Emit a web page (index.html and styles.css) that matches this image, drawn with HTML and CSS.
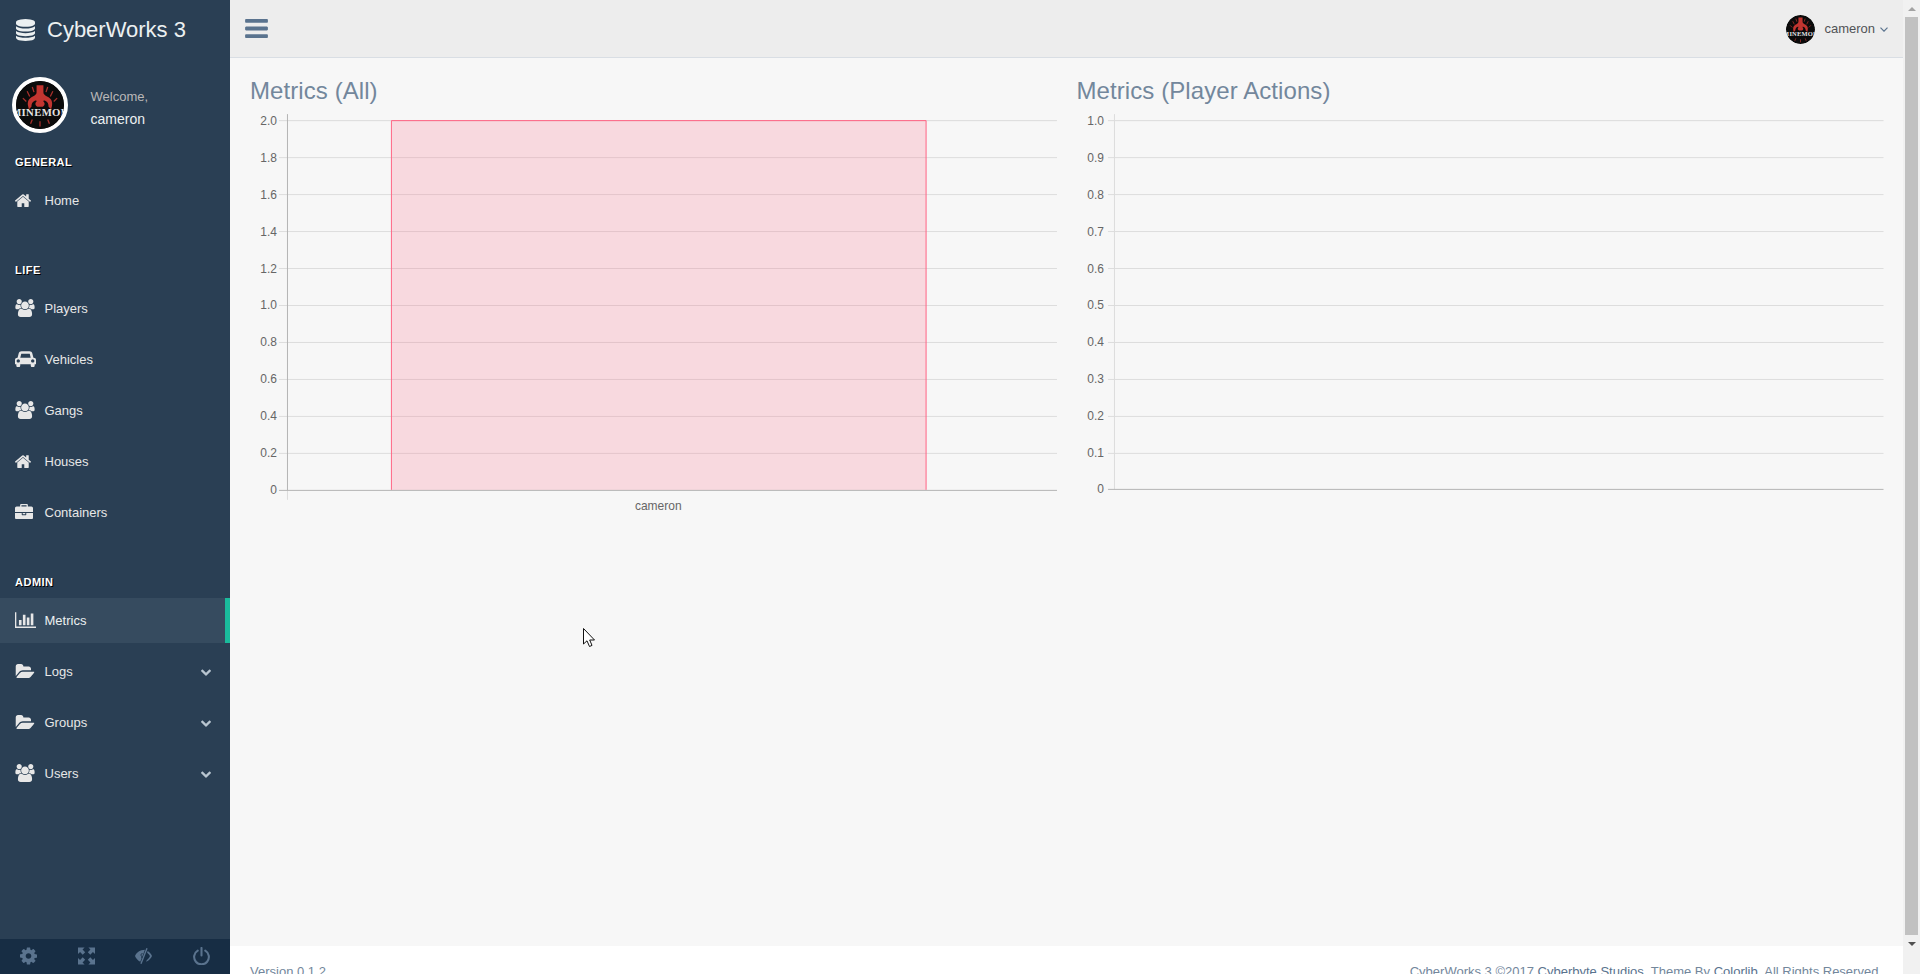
FILE: index.html
```html
<!DOCTYPE html>
<html lang="en">
<head>
<meta charset="utf-8">
<title>CyberWorks 3</title>
<link rel="stylesheet" href="styles.css">
</head>
<body>
<svg class="defs" width="0" height="0" aria-hidden="true">
  <defs>
    <symbol id="i-database" viewBox="128 0 1536 1792" preserveAspectRatio="none"><path d="M896 768q237 0 443-43t325-127v170q0 69-103 128t-280 93.5-385 34.5-385-34.5T231 896 128 768V598q119 84 325 127t443 43zm0 768q237 0 443-43t325-127v170q0 69-103 128t-280 93.5-385 34.5-385-34.5-280-93.5-103-128v-170q119 84 325 127t443 43zm0-384q237 0 443-43t325-127v170q0 69-103 128t-280 93.5-385 34.5-385-34.5-280-93.5-103-128V982q119 84 325 127t443 43zM896 0q208 0 385 34.5t280 93.5 103 128v128q0 69-103 128t-280 93.5T896 640t-385-34.5T231 512 128 384V256q0-69 103-128t280-93.5T896 0z"/></symbol>
    <symbol id="i-home" viewBox="90 128 1612 1408"><path d="M1472 992v480q0 26-19 45t-45 19h-384v-384H768v384H384q-26 0-45-19t-19-45V992q0-1 .5-3t.5-3l575-474 575 474q1 2 1 6zm223-69l-62 74q-8 9-21 11h-3q-13 0-21-7L896 424l-692 577q-12 8-24 7-13-2-21-11l-62-74q-8-10-7-23.5t11-21.5l719-599q32-26 76-26t76 26l244 204V288q0-14 9-23t23-9h192q14 0 23 9t9 23v408l219 182q10 8 11 21.5t-7 23.5z"/></symbol>
    <symbol id="i-users" viewBox="0 0 1920 1792"><path d="M593 896q-162 5-265 128H194q-82 0-138-40.5T0 865q0-353 124-353 6 0 43.5 21t97.5 42.5T384 597q67 0 133-23-5 37-5 66 0 139 81 256zm1071 637q0 120-73 189.5t-194 69.5H523q-121 0-194-69.5T256 1533q0-53 3.5-103.5t14-109T300 1212t43-97.5 62-81 85.5-53.5T602 960q10 0 43 21.5t73 48 107 48 135 21.5 135-21.5 107-48 73-48 43-21.5q61 0 111.5 20t85.5 53.5 62 81 43 97.5 26.5 108.5 14 109 3.5 103.5zM640 256q0 106-75 181t-181 75-181-75-75-181 75-181T384 0t181 75 75 181zm704 384q0 159-112.5 271.5T960 1024 688.5 911.5 576 640t112.5-271.5T960 256t271.5 112.5T1344 640zm576 225q0 78-56 118.5t-138 40.5h-134q-103-123-265-128 81-117 81-256 0-29-5-66 66 23 133 23 59 0 119-21.5t97.5-42.5 43.5-21q124 0 124 353zm-128-609q0 106-75 181t-181 75-181-75-75-181 75-181 181-75 181 75 75 181z"/></symbol>
    <symbol id="i-car" viewBox="0 128 2048 1536"><path d="M480 1088q0-66-47-113t-113-47-113 47-47 113 47 113 113 47 113-47 47-113zm36-320h1016l-89-357q-2-8-14-17.5t-21-9.5H640q-9 0-21 9.5T605 411zm1372 320q0-66-47-113t-113-47-113 47-47 113 47 113 113 47 113-47 47-113zm160-96v384q0 14-9 23t-23 9h-96v128q0 80-56 136t-136 56-136-56-56-136v-128H512v128q0 80-56 136t-136 56-136-56-56-136v-128H32q-14 0-23-9t-9-23V992q0-93 65.5-158.5T224 768h28l105-419q23-94 104-157.5T640 128h768q98 0 179 63.5T1691 349l105 419h28q93 0 158.5 65.5T2048 992z"/></symbol>
    <symbol id="i-briefcase" viewBox="0 0 1792 1536"><path d="M640 256h512V128H640v128zm1152 640v480q0 66-47 113t-113 47H160q-66 0-113-47T0 1376V896h672v160q0 26 19 45t45 19h320q26 0 45-19t19-45V896h672zm-768 0v128H768V896h256zm768-480v384H0V416q0-66 47-113t113-47h352V96q0-40 28-68t68-28h576q40 0 68 28t28 68v160h352q66 0 113 47t47 113z"/></symbol>
    <symbol id="i-chart" viewBox="0 128 2048 1536"><path d="M640 896v512H384V896h256zm384-512v1024H768V384h256zm1024 1152v128H0V128h128v1408h1920zm-640-896v768h-256V640h256zm384-384v1152h-256V256h256z"/></symbol>
    <symbol id="i-folder" viewBox="0 128 1943 1408"><path d="M1943 952q0 31-31 66l-336 396q-43 51-120.5 86.5t-143.5 35.5h-1088q-34 0-60.5-13t-26.5-43q0-31 31-66l336-396q43-51 120.5-86.5t143.5-35.5h1088q34 0 60.5 13t26.5 43zm-343-344v160h-832q-94 0-197 47.5t-164 119.5l-337 396-5 6q0-4-.5-12.5t-.5-12.5v-960q0-92 66-158t158-66h320q92 0 158 66t66 158v32h544q92 0 158 66t66 158z"/></symbol>
    <symbol id="i-chevron" viewBox="90 487 1612 1081"><path d="M1683 808l-742 741q-19 19-45 19t-45-19L109 808q-19-19-19-45.5t19-45.5l166-165q19-19 45-19t45 19l531 531 531-531q19-19 45-19t45 19l166 165q19 19 19 45.5t-19 45.5z"/></symbol>
    <symbol id="i-bars" viewBox="128 256 1536 1280"><path d="M1664 1344v128q0 26-19 45t-45 19H192q-26 0-45-19t-19-45v-128q0-26 19-45t45-19h1408q26 0 45 19t19 45zm0-512v128q0 26-19 45t-45 19H192q-26 0-45-19t-19-45V832q0-26 19-45t45-19h1408q26 0 45 19t19 45zm0-512v128q0 26-19 45t-45 19H192q-26 0-45-19t-19-45V320q0-26 19-45t45-19h1408q26 0 45 19t19 45z"/></symbol>
    <symbol id="i-cog" viewBox="128 128 1536 1536"><path d="M1152 896q0-106-75-181t-181-75-181 75-75 181 75 181 181 75 181-75 75-181zm512-109v222q0 12-8 23t-20 13l-185 28q-19 54-39 91 35 50 107 138 10 12 10 25t-9 23q-27 37-99 108t-94 71q-12 0-26-9l-138-108q-44 23-91 38-16 136-29 186-7 28-36 28H785q-14 0-24.5-8.5T749 1634l-28-184q-49-16-90-37l-141 107q-10 9-25 9-14 0-25-11-126-114-165-168-7-10-7-23 0-12 8-23 15-21 51-66.5t54-70.5q-27-50-41-99l-183-27q-13-2-21-12.5t-8-23.5V783q0-12 8-23t19-13l186-28q14-46 39-92-40-57-107-138-10-12-10-24 0-10 9-23 26-36 98.5-107.5T465 263q13 0 26 10l138 107q44-23 91-38 16-136 29-186 7-28 36-28h222q14 0 24.5 8.5T1043 158l28 184q49 16 90 37l142-107q9-9 24-9 13 0 25 10 129 119 165 170 7 8 7 22 0 12-8 23-15 21-51 66.5t-54 70.5q26 50 41 98l183 28q13 2 21 12.5t8 23.5z"/></symbol>
    <symbol id="i-full" viewBox="0 0 18 18"><path d="M0 0h7L4.8 2.2 7.6 5 5 7.6 2.2 4.8 0 7zM18 0v7l-2.2-2.2L13 7.600 10.400 5l2.800-2.800L11 0zM18 18h-7l2.200-2.200L10.400 13l2.600-2.600 2.800 2.800L18 11zM0 18v-7l2.200 2.200L5 10.400 7.600 13l-2.800 2.800L7 18z"/></symbol>
    <symbol id="i-eye" viewBox="0 0 18 18">
      <path d="M12 .5l1.400.6L7 17.500l-1.400-.6zM10.500 2.500L5.600 15C3 13.800 1 11.500 0 9 1.500 5.500 5.500 2.500 10.500 2.500zM13.400 3.800C15.500 5 17.200 7 18 9 17 11.500 14.800 14 11.800 15L12.500 13.200C14 12.300 15.200 10.800 15.900 9 15.200 7.500 14.200 6.400 12.800 5.500z"/>
      <path d="M8 6.500C6.500 6.500 6 7.500 6.500 8.500S7.600 10 6.800 11.200" fill="none" stroke="#172D44" stroke-width="1"/>
    </symbol>
    <symbol id="i-power" viewBox="0 0 18 18"><path class="stroke" d="M5 3.300A7.800 7.800 0 1 0 13 3.300M9 .5V8.500"/></symbol>
    <symbol id="i-logo" viewBox="0 0 56 56">
      <circle cx="28" cy="28" r="28" fill="#0b0b0b"/>
      <path d="M24 5h8v8c0 3 3 4 6 6 3 2 5 5 4 10l-1 4-3-3c0-3-1-6-4-7-2-1-3 0-1 2 1 2 0 4-2 5H25c-2-1-3-3-2-5 2-2 1-3-1-2-3 1-4 4-4 7l-3 3-1-4c-1-5 1-8 4-10 3-2 6-3 6-6z" fill="#c23530"/>
      <path d="M13 12l3 6M43 12l-3 6M8 20l4 4M48 20l-4 4M19 7l2 6M37 7l-2 6M17 50l2-5M39 50l-2-5M28 53v-6" stroke="#a8302c" stroke-width="1.500" fill="none"/>
      <text x="28" y="41" class="logo-text">MINEMOD</text>
    </symbol>
  </defs>
</svg>

<div class="app">
  <aside class="sidebar">
    <div class="brand">
      <svg class="brand-icon"><use href="#i-database"/></svg>
      <span class="brand-name">CyberWorks 3</span>
    </div>
    <div class="profile">
      <svg class="avatar"><use href="#i-logo"/></svg>
      <div class="profile-info">
        <span class="welcome">Welcome,</span>
        <span class="profile-name">cameron</span>
      </div>
    </div>
    <nav class="menu">
      <section class="menu-section">
        <h3>General</h3>
        <a class="item"><span class="ico"><svg class="i-home"><use href="#i-home"/></svg></span>Home</a>
      </section>
      <section class="menu-section">
        <h3>Life</h3>
        <a class="item"><span class="ico"><svg class="i-users"><use href="#i-users"/></svg></span>Players</a>
        <a class="item"><span class="ico"><svg class="i-car"><use href="#i-car"/></svg></span>Vehicles</a>
        <a class="item"><span class="ico"><svg class="i-users"><use href="#i-users"/></svg></span>Gangs</a>
        <a class="item"><span class="ico"><svg class="i-home"><use href="#i-home"/></svg></span>Houses</a>
        <a class="item"><span class="ico"><svg class="i-case"><use href="#i-briefcase"/></svg></span>Containers</a>
      </section>
      <section class="menu-section">
        <h3>Admin</h3>
        <a class="item active"><span class="ico"><svg class="i-car"><use href="#i-chart"/></svg></span>Metrics</a>
        <a class="item"><span class="ico"><svg class="i-folder"><use href="#i-folder"/></svg></span>Logs<svg class="chev"><use href="#i-chevron"/></svg></a>
        <a class="item"><span class="ico"><svg class="i-folder"><use href="#i-folder"/></svg></span>Groups<svg class="chev"><use href="#i-chevron"/></svg></a>
        <a class="item"><span class="ico"><svg class="i-users"><use href="#i-users"/></svg></span>Users<svg class="chev"><use href="#i-chevron"/></svg></a>
      </section>
    </nav>
    <div class="side-footer">
      <a class="foot-btn"><svg><use href="#i-cog"/></svg></a>
      <a class="foot-btn"><svg><use href="#i-full"/></svg></a>
      <a class="foot-btn"><svg><use href="#i-eye"/></svg></a>
      <a class="foot-btn"><svg><use href="#i-power"/></svg></a>
    </div>
  </aside>

  <div class="main">
    <header class="topbar">
      <svg class="toggle"><use href="#i-bars"/></svg>
      <div class="user">
        <svg class="user-avatar"><use href="#i-logo"/></svg>
        <span class="user-name">cameron</span>
        <svg class="angle" viewBox="0 0 8 5"><path d="M.5.7L4 4.200 7.500.7"/></svg>
      </div>
    </header>

    <main class="content">
      <div class="panel">
        <h3 class="panel-title">Metrics (All)</h3>
        <svg class="chart" viewBox="0 0 807 400">
          <g class="grid">
            <path d="M29 10.500H807.500M29 47.500H807.500M29 84.500H807.500M29 121.500H807.500M29 158.500H807.500M29 195.500H807.500M29 232.500H807.500M29 269.500H807.500M29 306.500H807.500M29 343.500H807.500"/>
            <path d="M37.500 380.500V390"/>
          </g>
          <path class="bar-fill" d="M141.500 10.500H676.500V380H141.500Z"/>
          <path class="bar-line" d="M141.500 380V10.500H676.500V380"/>
          <path class="axis" d="M37.500 4V380.500M29 380.500H807.500"/>
          <g class="ticks">
            <text x="27" y="14.500">2.0</text><text x="27" y="51.500">1.8</text><text x="27" y="88.500">1.6</text>
            <text x="27" y="125.500">1.4</text><text x="27" y="162.500">1.2</text><text x="27" y="199.500">1.0</text>
            <text x="27" y="236.500">0.8</text><text x="27" y="273.500">0.6</text><text x="27" y="310.500">0.4</text>
            <text x="27" y="347.500">0.2</text><text x="27" y="384.500">0</text>
          </g>
          <text class="label" x="408.500" y="400">cameron</text>
        </svg>
      </div>
      <div class="panel">
        <h3 class="panel-title">Metrics (Player Actions)</h3>
        <svg class="chart" viewBox="0 0 807 400">
          <g class="grid">
            <path d="M31 10.500H807M31 47.500H807M31 84.500H807M31 121.500H807M31 158.500H807M31 195.500H807M31 232.500H807M31 269.500H807M31 306.500H807M31 343.500H807"/>
            <path d="M37.500 4V380"/>
          </g>
          <path class="axis" d="M31 379.500H807"/>
          <g class="ticks">
            <text x="27" y="14.500">1.0</text><text x="27" y="51.500">0.9</text><text x="27" y="88.500">0.8</text>
            <text x="27" y="125.500">0.7</text><text x="27" y="162.500">0.6</text><text x="27" y="199.500">0.5</text>
            <text x="27" y="236.500">0.4</text><text x="27" y="273.500">0.3</text><text x="27" y="310.500">0.2</text>
            <text x="27" y="347.500">0.1</text><text x="27" y="383.500">0</text>
          </g>
        </svg>
      </div>
    </main>

    <footer class="footer">
      <span>Version 0.1.2</span>
      <span>CyberWorks 3 ©2017 <a>Cyberbyte Studios</a>. Theme By <a>Colorlib</a>. All Rights Reserved.</span>
    </footer>
  </div>

  <div class="scrollbar">
    <span class="arrow up"></span>
    <span class="thumb"></span>
    <span class="arrow down"></span>
  </div>
</div>

<svg class="cursor" viewBox="0 0 12 19"><path d="M.5.5V16L4 12.800 6.500 18.500 9 17.400 6.700 12H11.500Z"/></svg>
</body>
</html>
```

FILE: styles.css
```css
* { box-sizing: border-box; }
html, body { margin: 0; height: 974px; overflow: hidden; }
body {
  font-family: "Liberation Sans", Arial, sans-serif;
  font-size: 13px;
  line-height: 1.471;
  color: #73879C;
  background: #F7F7F7;
}
.defs { position: absolute; }
svg { display: block; fill: currentColor; }
.stroke { fill: none; stroke: currentColor; stroke-width: 2.200; stroke-linecap: round; }
.logo-text {
  font-family: "Liberation Serif", serif;
  font-weight: 700;
  font-size: 12.500px;
  letter-spacing: .4px;
  text-anchor: middle;
  fill: #e4e4e4;
}

.app { display: flex; height: 974px; }

/* sidebar */
.sidebar {
  width: 230px;
  flex: none;
  display: flex;
  flex-direction: column;
  background: #2A3F54;
  color: #ECF0F1;
}
.brand { height: 58px; display: flex; align-items: center; padding: 1px 0 0 16px; gap: 12px; }
.brand-icon { width: 19px; height: 22px; }
.brand-name { font-size: 22px; line-height: 1; }
.profile { display: flex; align-items: center; padding: 19px 0 0 12px; gap: 22.500px; }
.avatar { width: 56px; height: 56px; border: 4px solid #fff; border-radius: 50%; background: #0b0b0b; }
.profile-info { display: flex; flex-direction: column; gap: 3px; padding-top: 5px; }
.welcome { color: #BAB8B8; font-size: 13px; line-height: 19px; }
.profile-name { font-size: 14px; line-height: 20px; }

.menu { flex: 1; padding-top: 23px; }
.menu-section { margin-bottom: 41px; }
.menu-section h3 {
  margin: 0 0 10px;
  padding-left: 15px;
  font-size: 11px;
  line-height: 12px;
  letter-spacing: .5px;
  text-transform: uppercase;
  color: #fff;
  text-shadow: 1px 1px #000;
}
.item {
  position: relative;
  display: flex;
  align-items: center;
  height: 45px;
  margin-bottom: 6px;
  padding: 1px 0 0 15px;
  color: #E7E7E7;
  font-size: 13px;
}
.item.active {
  background: #364B5F;
  border-right: 5px solid #1ABB9C;
  color: #ECF0F1;
}
.ico { width: 29.500px; flex: none; margin-top: -3px; color: #E7E7E7; }
.i-home { width: 16px; height: 14px; }
.i-users { width: 20px; height: 18px; }
.i-car { width: 21px; height: 16px; }
.i-case { width: 18px; height: 15.500px; }
.i-folder { width: 19.500px; height: 14px; }
.chev { margin-left: auto; margin-right: 19px; width: 10px; height: 7px; color: #B8C5D0; }

.side-footer { display: flex; height: 35px; background: #172D44; }
.foot-btn { flex: 1; display: flex; justify-content: center; padding-top: 8px; color: #5A738E; }
.foot-btn svg { width: 17px; height: 18px; }

/* main */
.main { flex: 1; min-width: 0; display: flex; flex-direction: column; }
.topbar {
  height: 58px;
  flex: none;
  display: flex;
  align-items: center;
  justify-content: space-between;
  padding: 1px 15px 0 15px;
  background: #EDEDED;
  border-bottom: 1px solid #D9DEE4;
}
.toggle { width: 23px; height: 19px; margin-bottom: 2px; color: #5A738E; }
.user { display: flex; align-items: center; }
.user-avatar { width: 29px; height: 29px; border-radius: 50%; }
.user-name { margin-left: 9px; color: #515356; }
.angle { width: 8px; height: 5px; margin-left: 5px; fill: none; stroke: #5A738E; stroke-width: 1.200; }

.content {
  flex: 1;
  min-height: 0;
  display: grid;
  grid-template-columns: 1fr 1fr;
  align-content: start;
  padding: 0 10px;
}
.panel { padding: 0 10px; min-width: 0; }
.panel-title {
  margin: 0;
  padding-top: 18px;
  height: 52px;
  font-size: 24px;
  font-weight: 400;
  line-height: 29px;
  letter-spacing: .08px;
  color: #73879C;
}
.chart { width: 807px; max-width: 100%; height: 400px; overflow: visible; fill: none; }
.grid path { stroke: #DDD; stroke-width: 1; fill: none; }
.axis { stroke: #B4B4B4; stroke-width: 1; fill: none; }
.bar-fill { fill: rgba(255, 99, 132, .2); }
.bar-line { stroke: #FF6384; stroke-width: 1; fill: none; }
.ticks text { font-size: 12px; fill: #666; text-anchor: end; }
.label { font-size: 12px; fill: #666; text-anchor: middle; }

.footer {
  height: 28px;
  flex: none;
  display: flex;
  justify-content: space-between;
  padding: 16px 21px 0 20px;
  background: #fff;
  line-height: 19px;
  white-space: nowrap;
}
.footer a { color: #5A738E; }

/* scrollbar */
.scrollbar {
  width: 17px;
  flex: none;
  display: flex;
  flex-direction: column;
  align-items: center;
  background: #F1F1F1;
}
.thumb { width: 13px; height: 918px; background: #C1C1C1; }
.arrow { width: 17px; height: 17px; display: flex; align-items: center; justify-content: center; flex: none; }
.arrow::before { content: ""; border-left: 4px solid transparent; border-right: 4px solid transparent; }
.arrow.up::before { border-bottom: 4px solid #A3A3A3; }
.arrow.down::before { border-top: 4px solid #505050; }

.cursor {
  position: absolute;
  left: 583px;
  top: 628px;
  width: 12px;
  height: 19px;
  fill: #fff;
  stroke: #111;
  stroke-width: 1;
}
```
